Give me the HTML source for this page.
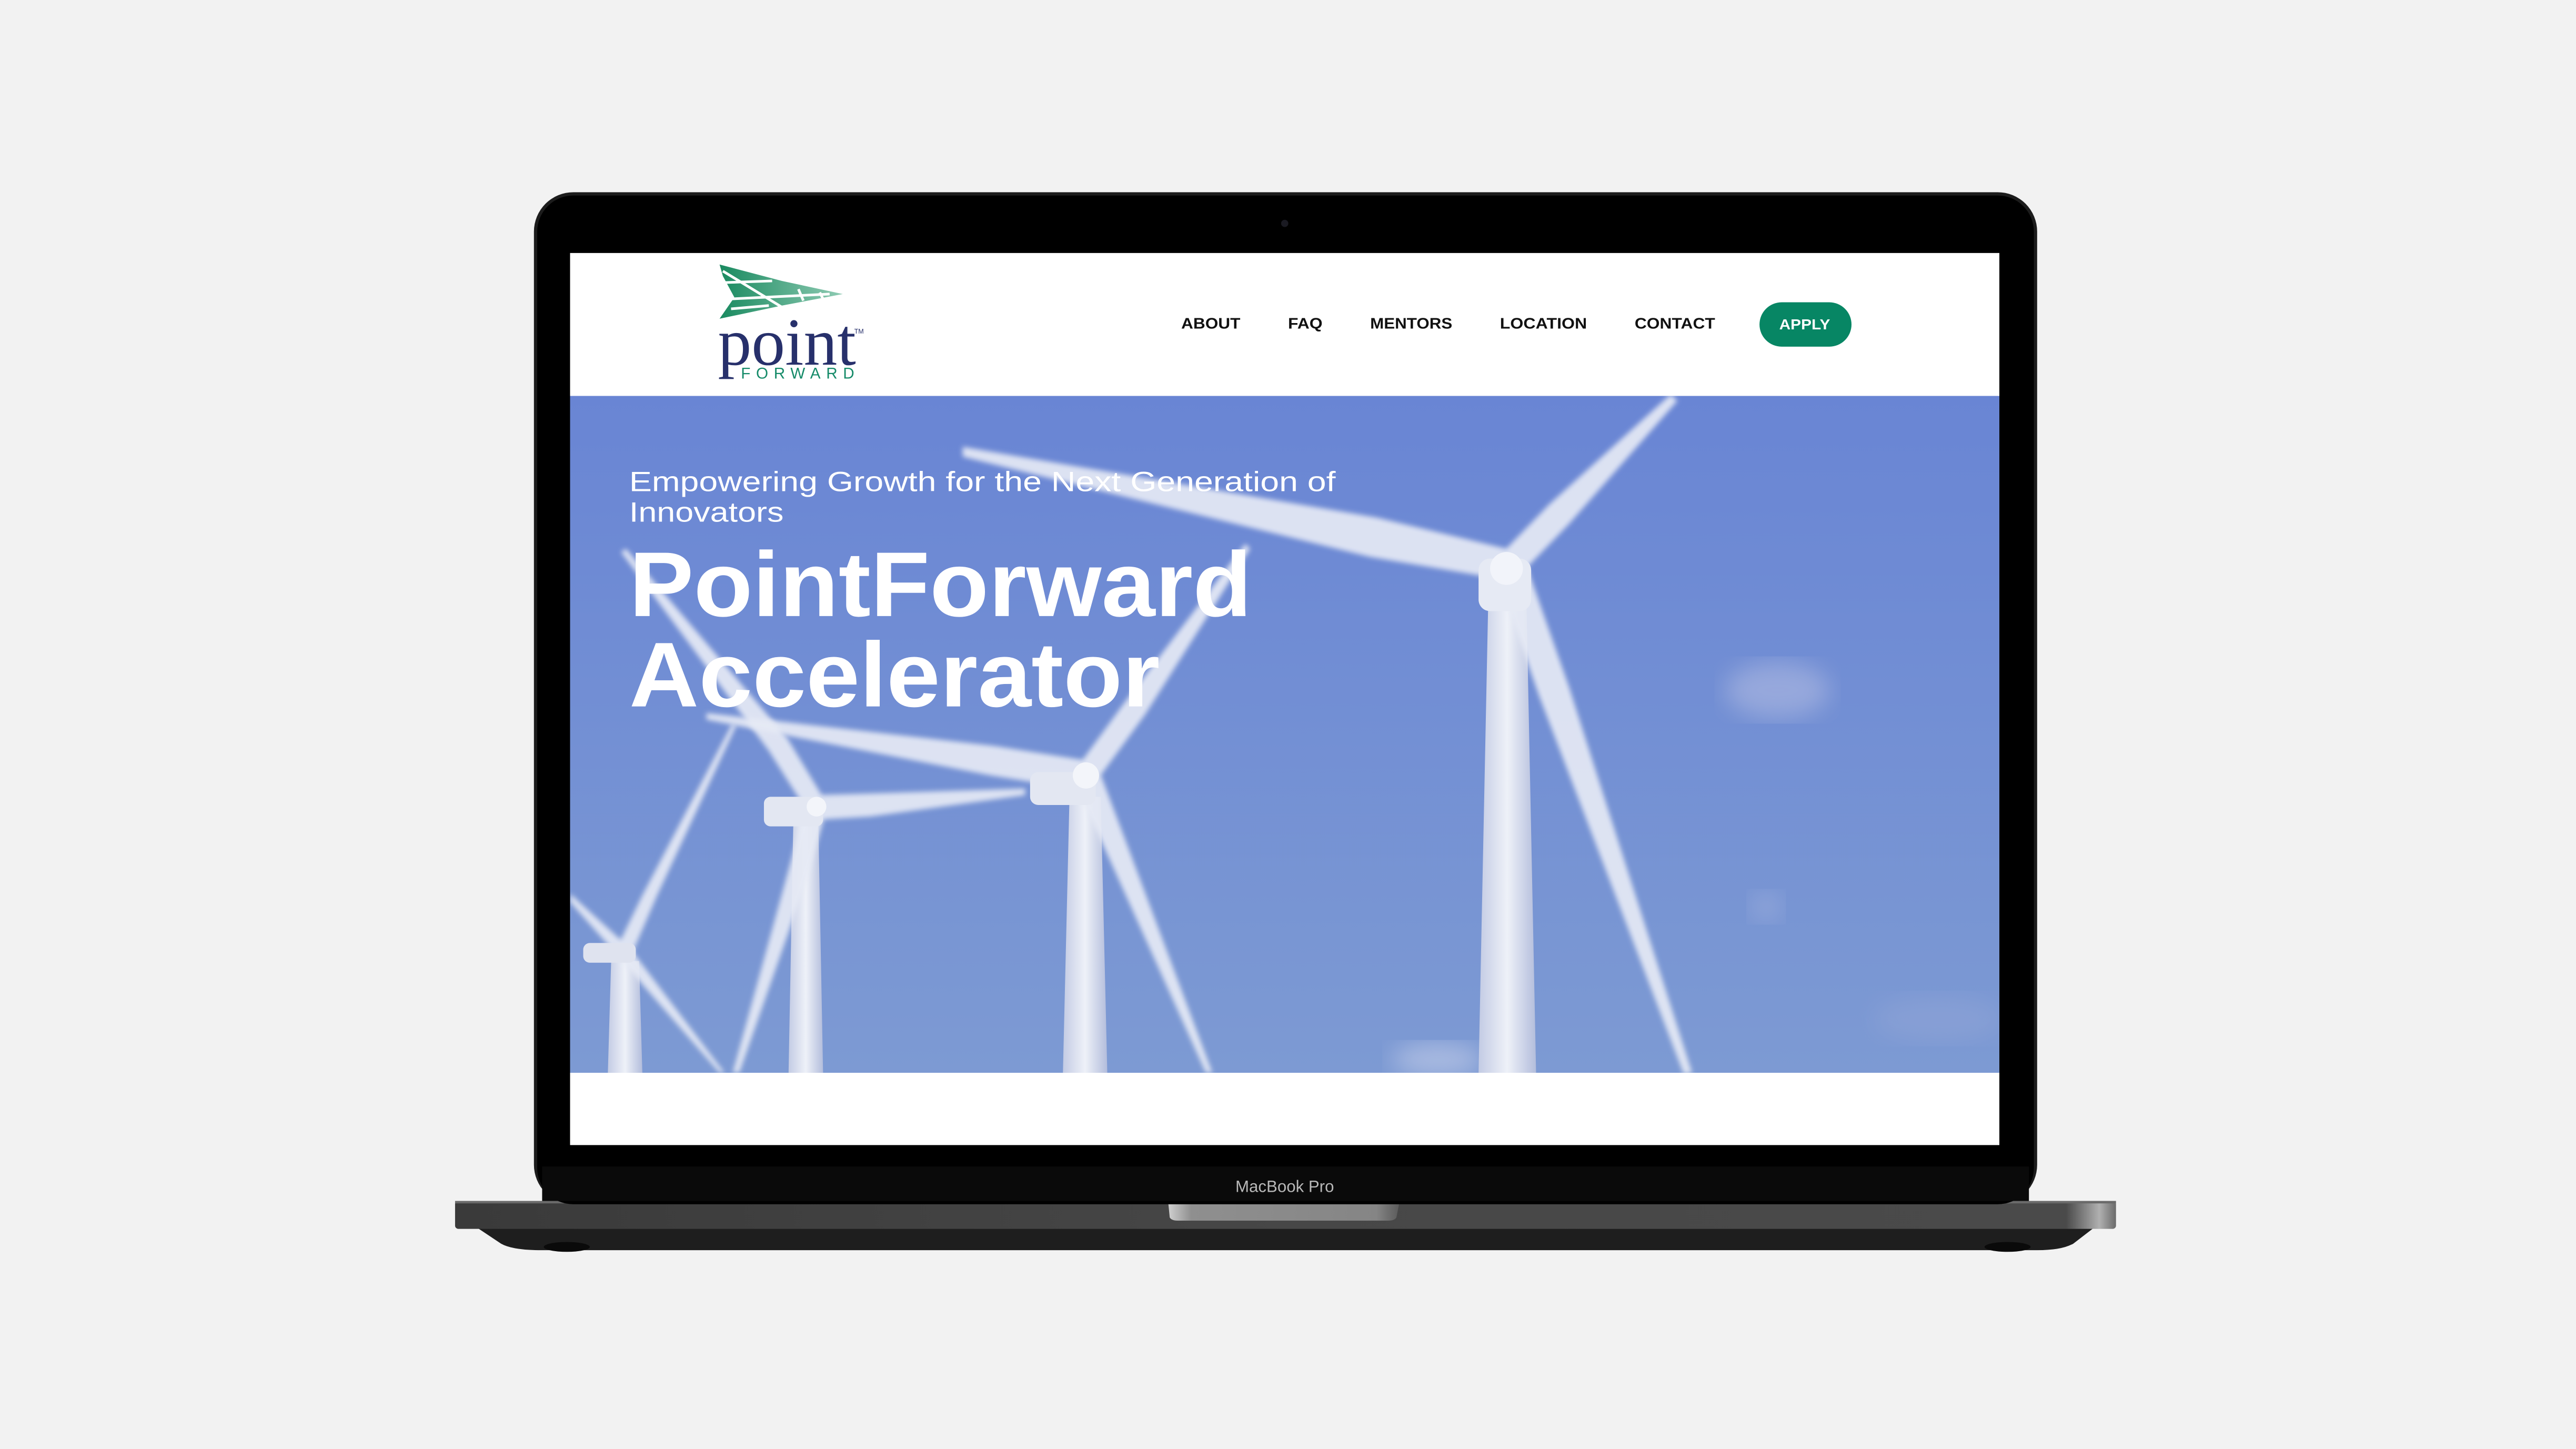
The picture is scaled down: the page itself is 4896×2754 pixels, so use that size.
<!DOCTYPE html>
<html><head><meta charset="utf-8">
<style>
html,body{margin:0;padding:0;background:#f2f2f2;}
svg{display:block;}
</style></head>
<body>
<svg width="4896" height="2754" viewBox="0 0 1568 882" xmlns="http://www.w3.org/2000/svg">
<defs>
<linearGradient id="sky" x1="0" y1="0" x2="0" y2="1">
<stop offset="0" stop-color="#6985d4"/><stop offset="1" stop-color="#7d9ad3"/>
</linearGradient>
<linearGradient id="flag" x1="0" y1="0" x2="1" y2="0">
<stop offset="0" stop-color="#1a8a60"/><stop offset="1" stop-color="#8fcbb3"/>
</linearGradient>
<linearGradient id="base" x1="0" y1="0" x2="1" y2="0">
<stop offset="0" stop-color="#3a3a3a"/><stop offset="0.5" stop-color="#474747"/><stop offset="0.97" stop-color="#4a4a4a"/><stop offset="0.99" stop-color="#b0b0b0"/><stop offset="1" stop-color="#6a6a6a"/>
</linearGradient>
<linearGradient id="notch" x1="0" y1="0" x2="1" y2="0">
<stop offset="0" stop-color="#d0d0d0"/><stop offset="0.1" stop-color="#8f8f8f"/><stop offset="0.9" stop-color="#858585"/><stop offset="1" stop-color="#5a5a5a"/>
</linearGradient>
<linearGradient id="tower" x1="0" y1="0" x2="1" y2="0">
<stop offset="0" stop-color="#c3cbe4"/><stop offset="0.5" stop-color="#eef1f8"/><stop offset="1" stop-color="#b3bddc"/>
</linearGradient>
<filter id="blur"><feGaussianBlur stdDeviation="1.5"/></filter>
<filter id="cl"><feGaussianBlur stdDeviation="7"/></filter>
</defs>

<rect width="1568" height="882" fill="#f2f2f2"/>

<!-- base -->
<path d="M290 747 L1275 747 L1262 757 Q1255 761 1240 761 L330 761 Q312 761 305 757 Z" fill="#1e1e1e"/>
<ellipse cx="345" cy="759" rx="14" ry="3" fill="#0a0a0a"/>
<ellipse cx="1222" cy="759" rx="14" ry="3" fill="#0a0a0a"/>
<rect x="277" y="731" width="1011" height="17" rx="2" fill="url(#base)"/>
<rect x="277" y="731" width="1011" height="1.5" fill="#6a6a6a"/>
<path d="M711 731 L852 731 L850 741 Q849 743 845 743 L717 743 Q713 743 712 741 Z" fill="url(#notch)"/>

<!-- lid -->
<rect x="325" y="117" width="915" height="616" rx="24" fill="#1c1c1c"/>
<rect x="327" y="119" width="911" height="614" rx="22" fill="#000"/>
<rect x="330" y="710" width="905" height="21" fill="#0a0a0a"/>
<circle cx="782" cy="136" r="2.2" fill="#1a1a22"/>
<text x="782" y="725.5" text-anchor="middle" font-family="Liberation Sans, sans-serif" font-size="10" fill="#b8b8b8">MacBook Pro</text>

<!-- screen -->
<rect x="347" y="154" width="870" height="543" fill="#fff"/>

<!-- hero -->
<svg x="347" y="241" width="870" height="412" viewBox="347 241 870 412" overflow="hidden">
<rect x="347" y="241" width="870" height="412" fill="url(#sky)"/>
<ellipse cx="1082" cy="420" rx="32" ry="17" fill="#c3c8e6" opacity="0.45" filter="url(#cl)"/>
<ellipse cx="1075" cy="552" rx="10" ry="9" fill="#c3c8e6" opacity="0.3" filter="url(#cl)"/>
<ellipse cx="875" cy="645" rx="28" ry="10" fill="#d6dbef" opacity="0.5" filter="url(#cl)"/>
<ellipse cx="1180" cy="620" rx="40" ry="14" fill="#a8b2dc" opacity="0.25" filter="url(#cl)"/>

<g fill="#e6eaf5">
<!-- small left turbine -->
<polygon points="372,585 389,585 391,653 370,653" fill="url(#tower)"/>
<g filter="url(#blur)" opacity="0.92">
<polygon points="384,582 400,545 448,442 446,440 391,545 375,578"/>
<polygon points="376,582 438,653 441,653 384,578"/>
<polygon points="381,575 347,544 347,549 379,585"/>
</g>
<rect x="355" y="574" width="32" height="12" rx="4" fill="#dfe3ef"/>
<!-- left-middle turbine -->
<polygon points="483,495 498,495 501,653 480,653" fill="url(#tower)"/>
<g filter="url(#blur)" opacity="0.92">
<polygon points="502,487 479,449 381,334 378,336 468,457 492,495"/>
<polygon points="497,499 530,497 624,484 624,480 530,483 497,484"/>
<polygon points="491,489 479,533 446,653 450,653 491,536 503,493"/>
</g>
<rect x="465" y="485" width="36" height="18" rx="4" fill="#e3e7f2"/>
<circle cx="497" cy="491" r="6" fill="#f3f5fa"/>
<!-- middle turbine -->
<polygon points="651,485 670,485 674,653 647,653" fill="url(#tower)"/>
<g filter="url(#blur)" opacity="0.92">
<polygon points="667,476 697,435 761,334 758,331 685,427 655,468"/>
<polygon points="662,463 605,454 430,434 430,438 603,472 660,481"/>
<polygon points="653,475 674,520 734,653 738,653 686,514 669,469"/>
</g>
<rect x="627" y="470" width="40" height="20" rx="5" fill="#e3e7f2"/>
<circle cx="661" cy="472" r="8" fill="#f3f5fa"/>
<!-- big turbine -->
<polygon points="906,360 929,360 935,653 900,653" fill="url(#tower)"/>
<g filter="url(#blur)" opacity="0.92">
<polygon points="921,335 838,315 586,272 586,278 834,339 917,353"/>
<polygon points="925,350 955,319 1021,244 1017,240 943,307 913,338"/>
<polygon points="910,347 937,424 1025,654 1030,653 955,418 928,341"/>
</g>
<rect x="900" y="340" width="32" height="32" rx="7" fill="#e6eaf4"/>
<circle cx="917" cy="346" r="10" fill="#f2f4fa"/>
</g>

<text x="383" y="299" font-family="Liberation Sans, sans-serif" font-size="17" fill="#fff" textLength="430" lengthAdjust="spacingAndGlyphs">Empowering Growth for the Next Generation of</text>
<text x="383" y="317.5" font-family="Liberation Sans, sans-serif" font-size="17" fill="#fff" textLength="94" lengthAdjust="spacingAndGlyphs">Innovators</text>
<text x="383" y="375" font-family="Liberation Sans, sans-serif" font-weight="bold" font-size="56" fill="#fff" textLength="379" lengthAdjust="spacingAndGlyphs">PointForward</text>
<text x="383" y="430" font-family="Liberation Sans, sans-serif" font-weight="bold" font-size="56" fill="#fff" textLength="323" lengthAdjust="spacingAndGlyphs">Accelerator</text>
</svg>

<!-- logo -->
<g>
<polygon points="438,161 476,171 513,179 476,186 438,194 447,181 440,168" fill="url(#flag)"/>
<g stroke="#fff" stroke-width="1.6" fill="none">
<line x1="440" y1="165" x2="476" y2="187"/>
<line x1="441" y1="172" x2="470" y2="171"/>
<line x1="444" y1="182" x2="505" y2="179"/>
<line x1="445" y1="188" x2="468" y2="186"/>
<line x1="486" y1="176" x2="489" y2="183"/>
<line x1="499" y1="178" x2="501" y2="182"/>
</g>
<text x="437" y="222" font-family="Liberation Serif, serif" font-size="41" fill="#27306b" textLength="84" lengthAdjust="spacingAndGlyphs">point</text>
<text x="520" y="203" font-family="Liberation Sans, sans-serif" font-size="4" fill="#27306b">TM</text>
<text x="451" y="230.5" font-family="Liberation Sans, sans-serif" font-size="9.5" fill="#148a68" textLength="69" lengthAdjust="spacing">FORWARD</text>
</g>

<g font-family="Liberation Sans, sans-serif" font-weight="bold" font-size="9.2" fill="#111">
<text x="719" y="200" textLength="36" lengthAdjust="spacingAndGlyphs">ABOUT</text>
<text x="784" y="200" textLength="21" lengthAdjust="spacingAndGlyphs">FAQ</text>
<text x="834" y="200" textLength="50" lengthAdjust="spacingAndGlyphs">MENTORS</text>
<text x="913" y="200" textLength="53" lengthAdjust="spacingAndGlyphs">LOCATION</text>
<text x="995" y="200" textLength="49" lengthAdjust="spacingAndGlyphs">CONTACT</text>
</g>
<rect x="1071" y="184" width="56" height="27" rx="13.5" fill="#078664"/>
<text x="1083" y="200.5" font-family="Liberation Sans, sans-serif" font-weight="bold" font-size="9" fill="#fff" textLength="31" lengthAdjust="spacingAndGlyphs">APPLY</text>
</svg>
</body></html>
